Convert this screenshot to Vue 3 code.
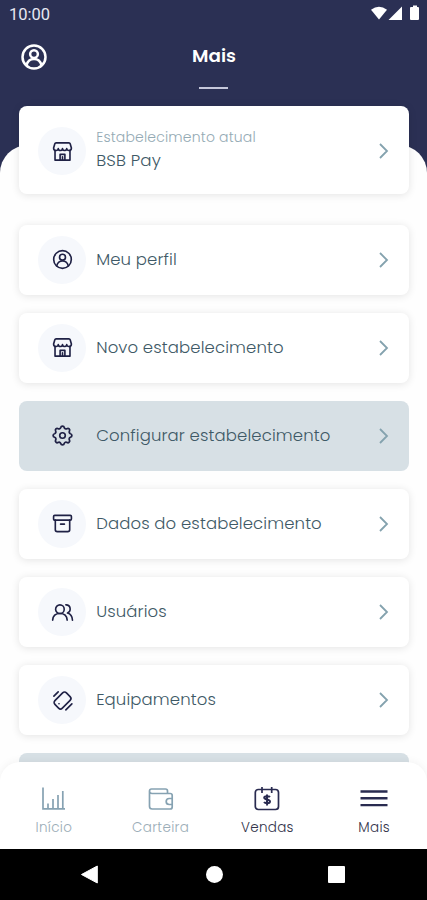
<script setup>
const items = [
  { label: 'Meu perfil', icon: 'user' },
  { label: 'Novo estabelecimento', icon: 'store' },
  { label: 'Configurar estabelecimento', icon: 'gear', active: true },
  { label: 'Dados do estabelecimento', icon: 'box' },
  { label: 'Usuários', icon: 'users' },
  { label: 'Equipamentos', icon: 'device' },
]

const icons = {
  user: '<circle cx="12" cy="12" r="9.2"/><circle cx="12" cy="9.6" r="3.1"/><path d="M6 18.6c.9-3.4 3-5 6-5s5.100 1.600 6 5"/>',
  store: '<path d="M5.300 3h13.400q1 0 1.300 1l1.300 4.300c0 1.700-1.100 2.700-2.600 2.700-1.300 0-2.200-.9-2.300-2.100-.2 1.300-1.200 2.100-2.200 2.100S12.200 10.200 12 8.900C11.800 10.200 10.800 11 9.800 11S7.800 10.200 7.600 8.900C7.500 10.100 6.600 11 5.300 11c-1.500 0-2.600-1-2.600-2.700L4 4q.3-1 1.300-1Z"/><path d="M4.200 11v10h15.600V11M9.500 21v-6h5v6M12 17.500V21"/>',
  gear: '<circle cx="12" cy="12" r="2.900"/><path transform="translate(12 12) scale(1.080) translate(-12 -12)" d="M10.300 4.300c.4-1.800 3-1.800 3.400 0a1.750 1.750 0 0 0 2.600 1.100c1.600-.9 3.300.8 2.400 2.400a1.750 1.750 0 0 0 1 2.500c1.800.4 1.800 3 0 3.400a1.750 1.750 0 0 0-1 2.600c.9 1.600-.8 3.300-2.400 2.400a1.750 1.750 0 0 0-2.600 1c-.4 1.800-3 1.800-3.400 0a1.750 1.750 0 0 0-2.500-1c-1.600.9-3.300-.8-2.400-2.400a1.750 1.750 0 0 0-1.100-2.600c-1.800-.4-1.800-3 0-3.400a1.750 1.750 0 0 0 1.100-2.500c-.9-1.600.8-3.300 2.400-2.400a1.750 1.750 0 0 0 2.500-1.100Z"/>',
  box: '<rect x="2.700" y="3.500" width="18.600" height="5" rx="1.200"/><path d="M4.500 8.500v10q0 2 2 2h11q2 0 2-2v-10M10 12.700h4"/>',
  users: '<circle cx="9.300" cy="8.600" r="4.500"/><path d="M1.700 20c.3-4.500 3.300-6.900 7.600-6.900s7.300 2.400 7.600 6.900M15.500 4c5.200-.2 6 6.700 1.700 8.600 3.200.9 5 3.400 5.200 7.400"/>',
  device: '<rect x="6.500" y="3.500" width="11" height="17" rx="2.800" transform="rotate(45 12 12)"/><path d="M3 7.500 7.500 3M15.500 21.800l6.300-6.300M8.300 15.400h.1"/>',
}

const tabs = [
  { label: 'Início', muted: true, icon: '<path d="M2 1.500v21.300h22M7 22.500v-5M12 22.500V13M17 22.500V9M21.800 22.500V5"/>' },
  { label: 'Carteira', muted: true, icon: '<path d="M19.500 7.500V5q0-2-2-2H3.500q-2 0-2 2.300v15q0 2.700 2.700 2.700h18q2 0 2-2V9.500q0-2-2-2H4q-2.500 0-2.500-2.200M24.200 12.500h-3a3 3 0 0 0 0 6h3"/>' },
  { label: 'Vendas', icon: '<rect x="1.300" y="3.500" width="23.200" height="20" rx="3"/><path d="M8 1v6M17.700 1v6"/><path stroke-width="2" d="M16 11c-1.300-1.300-5.800-1.200-5.800.8 0 2.200 5.800 1.200 5.800 3.700 0 2.200-4.700 2.200-6 .5M13 8.500v11"/>' },
  { label: 'Mais', icon: '<path stroke-width="2.400" d="M-.500 5.500h27M-.500 12.300h27M-.500 19.100h27"/>' },
]
</script>

<template>
  <div class="screen">
    <header class="top">
      <div class="status">
        <span class="clock">10:00</span>
        <svg class="signals" width="50" height="18" viewBox="0 0 50 18" fill="#fff">
          <path d="M1 4.700Q9 -1.300 17 4.700L9 14.500Z" />
          <path d="M18.500 15H32V1.500Z" />
          <path d="M41 2h2V.500h4V2h1q1 0 1 1v11q0 1-1 1h-7q-1 0-1-1V3q0-1 1-1Z" />
        </svg>
      </div>
      <div class="titlebar">
        <svg class="avatar" width="30" height="30" viewBox="0 0 24 24" v-html="icons.user"></svg>
        <h1>Mais</h1>
      </div>
      <div class="rule"></div>
    </header>

    <main class="sheet">
      <section class="card current">
        <span class="bubble"><svg class="icon" viewBox="0 0 24 24" v-html="icons.store"></svg></span>
        <div class="text">
          <div class="small">Estabelecimento atual</div>
          <div class="name">BSB Pay</div>
        </div>
        <svg class="chevron" viewBox="0 0 10 16"><path d="M1 1l7 7-7 7" /></svg>
      </section>

      <section v-for="item in items" :key="item.label" class="card" :class="{ active: item.active }">
        <span class="bubble"><svg class="icon" viewBox="0 0 24 24" v-html="icons[item.icon]"></svg></span>
        <div class="text">{{ item.label }}</div>
        <svg class="chevron" viewBox="0 0 10 16"><path d="M1 1l7 7-7 7" /></svg>
      </section>
      <section class="card active"></section>
    </main>

    <div class="bottom">
      <nav class="tabs">
        <div v-for="tab in tabs" :key="tab.label" class="tab" :class="{ muted: tab.muted }">
          <svg width="26" height="26" viewBox="0 0 26 26" v-html="tab.icon"></svg>
          <span>{{ tab.label }}</span>
        </div>
      </nav>
      <div class="system">
        <svg width="20" height="22" viewBox="0 0 20 22"><path d="M17.300 2v17L1.500 10.500Z" fill="#fff" stroke="#fff" stroke-linejoin="round" /></svg>
        <span class="home"></span>
        <span class="recent"></span>
      </div>
    </div>
  </div>
</template>

<style>
body { background: #2b3054; overflow: hidden; }
</style>

<style scoped>
.screen {
  height: 900px;
  display: flex;
  flex-direction: column;
  overflow: hidden;
  background: #2b3054;
  font-family: Poppins, Inter, "Open Sans", sans-serif;
  font-weight: 300;
}
.top { height: 145px; flex: none; color: #fff; }
.status {
  height: 28px;
  display: flex;
  justify-content: space-between;
  padding: 0 7px 0 9px;
}
.clock { font: 400 16.500px/29px Roboto, sans-serif; color: #e6e8f2; }
.signals { margin-top: 5px; }
.titlebar {
  height: 58px;
  display: grid;
  grid-template-columns: 1fr auto 1fr;
  align-items: center;
  padding: 0 19px;
}
.avatar { fill: none; stroke: #fff; stroke-width: 2; }
h1 { margin: 0 -1px 3px 0; font-size: 18.300px; font-weight: 600; line-height: 26px; }
.rule { width: 29px; height: 2px; margin: 1px auto 0; background: #c5c7da; }
.sheet {
  flex: none;
  height: 755px;
  box-sizing: border-box;
  padding: 0 18.500px 0 19.200px;
  border-radius: 28px 28px 0 0;
  background: #fefefe;
  display: flex;
  flex-direction: column;
  gap: 18.100px;
}
.card {
  height: 70px;
  flex: none;
  box-sizing: border-box;
  display: flex;
  align-items: center;
  padding: 0 20px 0 19px;
  border-radius: 8px;
  background: #fff;
  box-shadow: 0 1px 9px rgba(0, 0, 0, .11);
  color: #3e5966;
  font-size: 16.500px;
  letter-spacing: .12px;
}
.current { height: 88px; margin: -39px 0 12.600px; padding-top: 2px; }
.active { background: #d7e0e5; box-shadow: none; }
.bubble {
  width: 48px;
  height: 48px;
  flex: none;
  border-radius: 50%;
  background: #f6f8fc;
  display: grid;
  place-items: center;
}
.active .bubble { background: none; }
.icon { width: 23px; height: 23px; fill: none; stroke: #1f2145; stroke-width: 1.700; stroke-linecap: round; stroke-linejoin: round; }
.text { flex: 1; margin-left: 10px; line-height: 24px; white-space: nowrap; }
.small { font-size: 14px; line-height: 22px; color: #94aab4; letter-spacing: .17px; }
.current .text { margin-top: -4px; }
.name { font-size: 16.700px; line-height: 24px; }
.chevron { width: 10px; height: 16px; fill: none; stroke: #84a2ae; stroke-width: 1.800; }
.bottom { position: absolute; top: 762px; left: 0; width: 427px; height: 138px; }
.tabs {
  height: 87px;
  display: grid;
  grid-template-columns: repeat(4, 1fr);
  border-radius: 20px 20px 0 0;
  background: #fff;
  box-shadow: 0 -1px 8px rgba(0, 0, 0, .05);
}
.tab {
  display: flex;
  flex-direction: column;
  align-items: center;
  padding: 24px 0 0 1px;
  color: #32334a;
  font-size: 13.500px;
  letter-spacing: .3px;
}
.tab svg { fill: none; stroke: #292b50; stroke-width: 1.700; overflow: visible; }
.tab span { margin-top: 6px; line-height: 20px; }
.muted { color: #9badb7; }
.tab.muted svg { stroke: #86a2b2; }
.system {
  height: 51px;
  background: #000;
  display: flex;
  align-items: center;
  justify-content: space-between;
  padding: 0 82px 0 80px;
}
.home { width: 17px; height: 17px; border-radius: 50%; background: #fff; }
.recent { width: 17px; height: 17px; border-radius: 1px; background: #fff; }
</style>
